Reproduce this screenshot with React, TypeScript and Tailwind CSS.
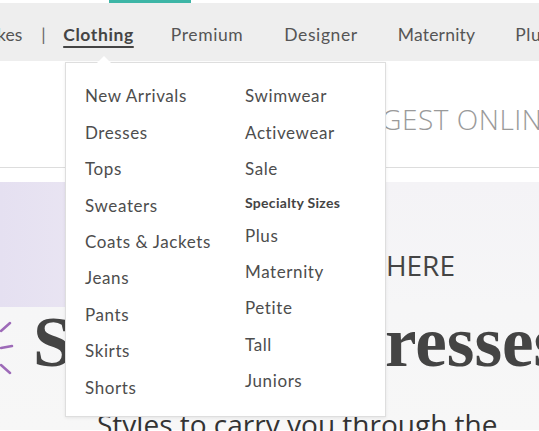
const leftCol = ['New Arrivals', 'Dresses', 'Tops', 'Sweaters', 'Coats & Jackets', 'Jeans', 'Pants', 'Skirts', 'Shorts'];
const rightTop = ['Swimwear', 'Activewear', 'Sale'];
const sizes = ['Plus', 'Maternity', 'Petite', 'Tall', 'Juniors'];

export default function App() {
  return (
    <div className="relative w-[539px] h-[431px] overflow-hidden bg-white font-['Lato',sans-serif]">
      {/* top accent */}
      <div className="h-[3px] flex">
        <div className="ml-[109px] w-[82px] bg-[#3db5a6]" />
      </div>

      {/* nav */}
      <nav className="h-[58px] bg-[#eeeeee] flex items-center whitespace-nowrap text-[17.5px] tracking-[0.6px] text-[#555] pt-[6px]">
        <span className="ml-[-3px] tracking-[0px]">kes</span>
        <span className="ml-[19px] text-[#666]">|</span>
        <span className="ml-[17px] font-bold text-[#444] underline underline-offset-[5px] decoration-2">Clothing</span>
        <span className="ml-[37px]">Premium</span>
        <span className="ml-[41px]">Designer</span>
        <span className="ml-[40px] tracking-[0.2px]">Maternity</span>
        <span className="ml-[40px]">Plus</span>
      </nav>

      {/* page content */}
      <div className="h-[107px] border-b border-[#dddddd] flex items-center whitespace-nowrap">
        <span className="ml-[335px] mt-[10px] text-[28px] font-light text-[#9a9a9a] font-['Open_Sans',sans-serif] tracking-[0.5px]">
          BIGGEST ONLINE
        </span>
      </div>
      <div className="h-[14px]" />

      {/* hero */}
      <div className="relative h-[248px] bg-gradient-to-b from-[#f4f3f6] via-[#f6f6f7] to-[#f7f7f7]">
        <div className="absolute left-0 top-0 w-[260px] h-[125px] bg-gradient-to-r from-[#e5e0f1] via-[#ece8f3] to-[#f4f3f6]" />
        <div className="relative flex flex-col">
          <div className="h-[69px]" />
          <div className="ml-[304px] text-[28px] text-[#444] font-['Open_Sans',sans-serif] leading-none whitespace-nowrap">SHOP HERE</div>
          <div className="mt-[26px] flex items-start h-[82px]">
            <svg width="14" height="56" viewBox="0 0 14 56" className="mt-[15px] mr-[19px] shrink-0">
              <path d="M10 3 L1 11" stroke="#9d6ab8" strokeWidth="2.5" strokeLinecap="round" />
              <path d="M12 26 L1 28" stroke="#9d6ab8" strokeWidth="2.5" strokeLinecap="round" />
              <path d="M10 53 L1 45" stroke="#9d6ab8" strokeWidth="2.5" strokeLinecap="round" />
            </svg>
            <span className="mt-[2px] shrink-0 text-[71px] font-bold text-[#444] font-['Liberation_Serif',serif] leading-none whitespace-nowrap [word-spacing:24px]">
              Summer Dresses
            </span>
          </div>
          <div className="mt-[23px] ml-[97px] text-[28px] text-[#333] font-['Open_Sans',sans-serif] whitespace-nowrap leading-none">
            Styles to carry you through the
          </div>
        </div>
      </div>

      {/* dropdown */}
      <div className="absolute left-[65px] top-[62px] w-[321px] h-[355px] bg-white border border-[#dedede] shadow-[0_1px_3px_rgba(0,0,0,0.08)]">
        <div className="absolute left-[31px] top-[-7px] w-0 h-0 border-l-[7px] border-r-[7px] border-b-[7px] border-l-transparent border-r-transparent border-b-white" />
        <div className="flex pl-[19px] pt-[15px] text-[17px] tracking-[0.6px] text-[#4d4d4d]">
          <ul className="w-[160px] flex flex-col">
            {leftCol.map((t) => (
              <li key={t} className="h-[36.4px] flex items-center">{t}</li>
            ))}
          </ul>
          <ul className="flex flex-col">
            {rightTop.map((t) => (
              <li key={t} className="h-[36.4px] flex items-center">{t}</li>
            ))}
            <li className="h-[30px] flex items-center text-[14px] tracking-[0.3px] font-bold text-[#444]">Specialty Sizes</li>
            {sizes.map((t) => (
              <li key={t} className="h-[36.4px] flex items-center">{t}</li>
            ))}
          </ul>
        </div>
      </div>
    </div>
  );
}
